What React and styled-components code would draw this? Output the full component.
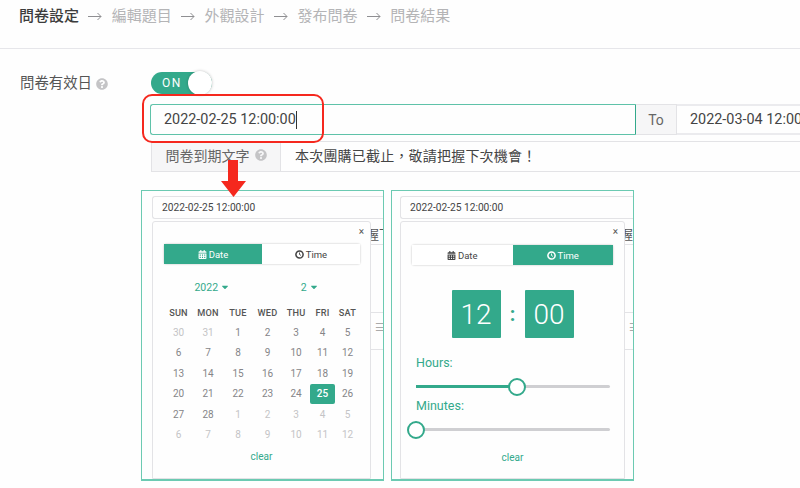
import React from 'react';
import styled, { createGlobalStyle } from 'styled-components';
import { FaCalendarAlt, FaQuestionCircle, FaCaretDown } from 'react-icons/fa';

const green = '#33a98b';
const panelLine = '#6ccab2';
const line = '#e3e3e6';

const GlobalStyle = createGlobalStyle`
  html, body {
    margin: 0;
    padding: 0;
    width: 800px;
    height: 488px;
    overflow: hidden;
    background: #fefefe;
    color: #444;
    font-family: Roboto, "Noto Sans CJK TC", "Liberation Sans", sans-serif;
  }
  * { box-sizing: border-box; }
`;

const Page = styled.div`
  position: relative;
  width: 800px;
  height: 488px;
  overflow: hidden;
`;

const StepBar = styled.nav`
  height: 49px;
  padding: 6px 0 0 19px;
  display: flex;
  align-items: flex-start;
  gap: 9.4px;
  border-bottom: 1px solid #e6e6ea;
`;

const Step = styled.span`
  font-size: 15px;
  line-height: 20px;
  font-weight: ${p => (p.$active ? 500 : 400)};
  color: ${p => (p.$active ? '#3c3c3c' : '#b4b4b6')};
  white-space: nowrap;
`;

const StepArrow = styled.svg`
  width: 14px;
  height: 20px;
  flex: none;
`;

const FormRow = styled.div`
  display: flex;
  padding: 23px 0 0 20px;
`;

const FormLabel = styled.div`
  width: 130px;
  flex: none;
  font-size: 14.4px;
  line-height: 18px;
  color: #555;
  display: flex;
  align-items: center;
  gap: 4px;
  height: 24px;
`;

const HelpIcon = styled(FaQuestionCircle)`
  color: #c4c4c6;
  font-size: 12px;
`;

const FormContent = styled.div`
  width: 650px;
  flex: none;
`;

const Toggle = styled.div`
  width: 61px;
  height: 22px;
  margin-left: 1px;
  border-radius: 11px;
  background: ${green};
  position: relative;
  color: #fff;
  font-size: 12px;
  line-height: 22px;
  letter-spacing: 1.5px;
  padding-left: 11px;
`;

const ToggleKnob = styled.span`
  position: absolute;
  right: 0;
  top: -1px;
  width: 24px;
  height: 24px;
  border-radius: 50%;
  background: #fff;
  box-shadow: 0 0 3px rgba(0, 0, 0, 0.25);
`;

const DateGroup = styled.div`
  display: flex;
  margin-top: 10px;
  height: 31px;
  width: 660px;
`;

const FocusField = styled.div`
  width: 486px;
  flex: none;
  display: flex;
  align-items: center;
  padding-left: 13px;
  font-size: 14.4px;
  color: #444;
  white-space: nowrap;
  border: 1px solid #5fc2a9;
  border-right-color: ${green};
  border-radius: 3px 0 0 3px;
`;

const PlainField = styled.div`
  flex: 1;
  display: flex;
  align-items: center;
  padding-left: 13px;
  font-size: 14.4px;
  color: #444;
  white-space: nowrap;
  border-top: 2px solid #ebebee;
  border-bottom: 2px solid #ebebee;
`;

const Caret = styled.span`
  display: inline-block;
  width: 1px;
  height: 18px;
  background: #333;
`;

const Addon = styled.div`
  width: ${p => p.$width}px;
  flex: none;
  display: flex;
  align-items: center;
  justify-content: center;
  gap: 5px;
  padding-bottom: ${p => (p.$left ? 3 : 0)}px;
  background: #f6f6f7;
  border: 1px solid ${line};
  border-left-width: ${p => (p.$left ? 1 : 0)}px;
  font-size: 14px;
  color: #666;
`;

const MessageGroup = styled.div`
  display: flex;
  margin: 6px 0 0 1px;
  height: 31px;
  width: 660px;
`;

const MessageText = styled.div`
  flex: 1;
  display: flex;
  align-items: center;
  padding: 0 0 3px 14px;
  font-size: 14px;
  letter-spacing: 0.2px;
  color: #444;
  border: 1px solid ${line};
  border-left: 0;
`;

const PanelRow = styled.div`
  display: flex;
  gap: 7px;
  margin: 18px 0 0 -9px;
`;

const Panel = styled.section`
  width: 243px;
  height: 291px;
  flex: none;
  border: 1px solid ${panelLine};
  border-bottom-width: 2px;
  padding: 5px 0 0 ${p => p.$inset}px;
  overflow: hidden;
`;

const PanelInput = styled.div`
  height: 23px;
  display: flex;
  align-items: center;
  padding-left: 9px;
  font-size: 10.2px;
  color: #444;
  border: 1px solid ${line};
  border-right: 0;
  border-radius: 3px 0 0 3px;
`;

const PopupRow = styled.div`
  display: flex;
  margin-top: 2px;
  height: 258px;
`;

const Popup = styled.div`
  width: ${p => p.$width}px;
  flex: none;
  position: relative;
  border: 1px solid ${line};
  border-radius: 3px 3px 0 0;
  padding: ${p => p.$top}px 11px 0 11px;
  background: #fefefe;
`;

const CloseMark = styled.span`
  position: absolute;
  top: 4px;
  right: 6px;
  font-size: 10px;
  line-height: 12px;
  color: #555;
`;

const Behind = styled.div`
  flex: 1;
  overflow: hidden;
  height: 130px;
  font-size: 13px;
  color: #555;
  white-space: nowrap;
`;

const BehindText = styled.div`
  height: 24px;
  padding-top: 3px;
  text-indent: -5px;
  border-bottom: 1px solid ${line};
`;

const BehindIcon = styled.div`
  margin-top: 67px;
  height: 38px;
  padding: 8px 0 0 4px;
  border-top: 1px solid ${line};
  border-bottom: 1px solid ${line};
  color: #aaa;
  font-size: 11px;
`;

const Tabs = styled.div`
  display: flex;
  height: 20px;
  width: ${p => p.$width}px;
  border-radius: 2px;
  box-shadow: 0 0 2px rgba(0, 0, 0, 0.3);
`;

const Tab = styled.div`
  flex: 1;
  display: flex;
  align-items: center;
  justify-content: center;
  gap: 2px;
  font-size: 9.5px;
  background: ${p => (p.$active ? green : '#fff')};
  color: ${p => (p.$active ? '#fff' : '#444')};
  svg { font-size: 9px; }
`;

const PickerHead = styled.div`
  display: flex;
  margin-top: 16px;
  height: 16px;
  color: ${green};
  font-size: 10.5px;
  line-height: 16px;
`;

const PickerCell = styled.div`
  width: ${p => p.$width}px;
  text-align: center;
  svg { font-size: 10px; vertical-align: -1px; margin-left: 2px; }
`;

const CalendarGrid = styled.div`
  display: grid;
  grid-template-columns: 29px 30px 30px 29px 28px 25px 25px;
  grid-template-rows: 18px;
  grid-auto-rows: 20.5px;
  margin-top: 8px;
  width: 196px;
`;

const WeekHead = styled.div`
  text-align: center;
  line-height: 18px;
  font-size: 9.2px;
  font-weight: 500;
  letter-spacing: 0.2px;
  color: #555;
`;

const Day = styled.div`
  display: flex;
  align-items: center;
  justify-content: center;
  font-size: 10px;
  border-radius: 2px;
  color: ${p => (p.$selected ? '#fff' : p.$muted ? '#c4c4c6' : '#858588')};
  background: ${p => (p.$selected ? green : 'transparent')};
  font-weight: ${p => (p.$selected ? 500 : 400)};
`;

const ClearLink = styled.div`
  text-align: center;
  margin-top: ${p => p.$top}px;
  font-size: 10px;
  line-height: 14px;
  color: ${green};
`;

const Clock = styled.div`
  display: flex;
  justify-content: center;
  align-items: center;
  gap: 8px;
  margin-top: 25px;
`;

const ClockBox = styled.div`
  width: 49px;
  height: 48px;
  display: flex;
  align-items: center;
  justify-content: center;
  background: ${green};
  color: #fff;
  border-radius: 1px;
  font-size: 28px;
  font-weight: 300;
`;

const ClockColon = styled.div`
  width: 8px;
  text-align: center;
  font-size: 20px;
  font-weight: 700;
  color: ${green};
`;

const SliderLabel = styled.div`
  margin: ${p => p.$top}px 0 0 4px;
  font-size: 12.5px;
  line-height: 16px;
  color: ${green};
`;

const SliderTrack = styled.div`
  position: relative;
  width: 194px;
  height: 3px;
  margin: ${p => p.$top}px 0 0 4px;
  background: #cfcfd2;
  border-radius: 2px;
`;

const SliderFill = styled.div`
  height: 100%;
  background: ${green};
`;

const SliderThumb = styled.span`
  position: absolute;
  top: 50%;
  width: 18px;
  height: 18px;
  margin: -9px 0 0 -9px;
  border: 2px solid ${green};
  border-radius: 50%;
  background: #fff;
`;

const RedRing = styled.div`
  position: absolute;
  left: 142px;
  top: 94px;
  width: 182px;
  height: 49px;
  border: 2px solid #f5281e;
  border-radius: 10px;
  pointer-events: none;
`;

const RedArrow = styled.svg`
  position: absolute;
  left: 221px;
  top: 160px;
  width: 25px;
  height: 37px;
`;

const steps = ['問卷設定', '編輯題目', '外觀設計', '發布問卷', '問卷結果'];
const weekDays = ['SUN', 'MON', 'TUE', 'WED', 'THU', 'FRI', 'SAT'];
const febDays = [
  [30, 1], [31, 1], [1], [2], [3], [4], [5],
  [6], [7], [8], [9], [10], [11], [12],
  [13], [14], [15], [16], [17], [18], [19],
  [20], [21], [22], [23], [24], [25, 0, 1], [26],
  [27], [28], [1, 1], [2, 1], [3, 1], [4, 1], [5, 1],
  [6, 1], [7, 1], [8, 1], [9, 1], [10, 1], [11, 1], [12, 1],
];
const expiredMessage = '本次團購已截止\uFF0C敬請把握下次機會\uFF01';

const ThinArrow = () => (
  <StepArrow viewBox="0 0 14 20" fill="none" stroke="#8f8f92" strokeWidth="1">
    <path d="M0 10.5h13M9.5 7l3.5 3.5-3.5 3.5" />
  </StepArrow>
);

// glyphicon style clock, heavier ring than the icon packages have
const ClockIcon = () => (
  <svg width="9" height="9" viewBox="0 0 10 10" fill="none" stroke="currentColor">
    <circle cx="5" cy="5" r="4" strokeWidth="1.7" />
    <path d="M5 2.8V5l1.6 1" strokeWidth="1" />
  </svg>
);

const PickerTabs = ({ active, width }) => (
  <Tabs $width={width}>
    <Tab $active={active === 'date'}><FaCalendarAlt />Date</Tab>
    <Tab $active={active === 'time'}><ClockIcon />Time</Tab>
  </Tabs>
);

const Slider = ({ value, top }) => (
  <SliderTrack $top={top}>
    <SliderFill style={{ width: `${value}%` }} />
    <SliderThumb style={{ left: `${value}%` }} />
  </SliderTrack>
);

const BehindForm = () => (
  <Behind>
    <BehindText>握下次</BehindText>
    <BehindIcon>☰</BehindIcon>
  </Behind>
);

export default function App() {
  return (
    <Page>
      <GlobalStyle />
      <StepBar>
        {steps.map((step, i) => (
          <React.Fragment key={step}>
            {i > 0 && <ThinArrow />}
            <Step $active={i === 0}>{step}</Step>
          </React.Fragment>
        ))}
      </StepBar>

      <FormRow>
        <FormLabel>問卷有效日 <HelpIcon /></FormLabel>
        <FormContent>
          <Toggle>ON<ToggleKnob /></Toggle>
          <DateGroup>
            <FocusField>2022-02-25 12:00:00<Caret /></FocusField>
            <Addon $width={41}>To</Addon>
            <PlainField>2022-03-04 12:00:00</PlainField>
          </DateGroup>
          <MessageGroup>
            <Addon $left $width={130}>問卷到期文字 <HelpIcon /></Addon>
            <MessageText>{expiredMessage}</MessageText>
          </MessageGroup>

          <PanelRow>
            <Panel $inset={10}>
              <PanelInput>2022-02-25 12:00:00</PanelInput>
              <PopupRow>
                <Popup $width={219} $top={22}>
                  <CloseMark>×</CloseMark>
                  <PickerTabs active="date" width={196} />
                  <PickerHead>
                    <PickerCell $width={101}>2022<FaCaretDown /></PickerCell>
                    <PickerCell $width={103}>2<FaCaretDown /></PickerCell>
                  </PickerHead>
                  <CalendarGrid>
                    {weekDays.map(d => <WeekHead key={d}>{d}</WeekHead>)}
                    {febDays.map(([n, muted, selected], i) => (
                      <Day key={i} $muted={muted} $selected={selected}>{n}</Day>
                    ))}
                  </CalendarGrid>
                  <ClearLink $top={5}>clear</ClearLink>
                </Popup>
                <BehindForm />
              </PopupRow>
            </Panel>

            <Panel $inset={8}>
              <PanelInput>2022-02-25 12:00:00</PanelInput>
              <PopupRow>
                <Popup $width={225} $top={23}>
                  <CloseMark>×</CloseMark>
                  <PickerTabs active="time" width={201} />
                  <Clock>
                    <ClockBox>12</ClockBox>
                    <ClockColon>:</ClockColon>
                    <ClockBox>00</ClockBox>
                  </Clock>
                  <SliderLabel $top={17}>Hours:</SliderLabel>
                  <Slider value={52} top={14} />
                  <SliderLabel $top={10}>Minutes:</SliderLabel>
                  <Slider value={0} top={14} />
                  <ClearLink $top={20}>clear</ClearLink>
                </Popup>
                <BehindForm />
              </PopupRow>
            </Panel>
          </PanelRow>
        </FormContent>
      </FormRow>

      <RedRing />
      <RedArrow viewBox="0 0 25 37" fill="#f5281e">
        <path d="M7 0h10v21h8L12.5 37 0 21h7z" />
      </RedArrow>
    </Page>
  );
}
